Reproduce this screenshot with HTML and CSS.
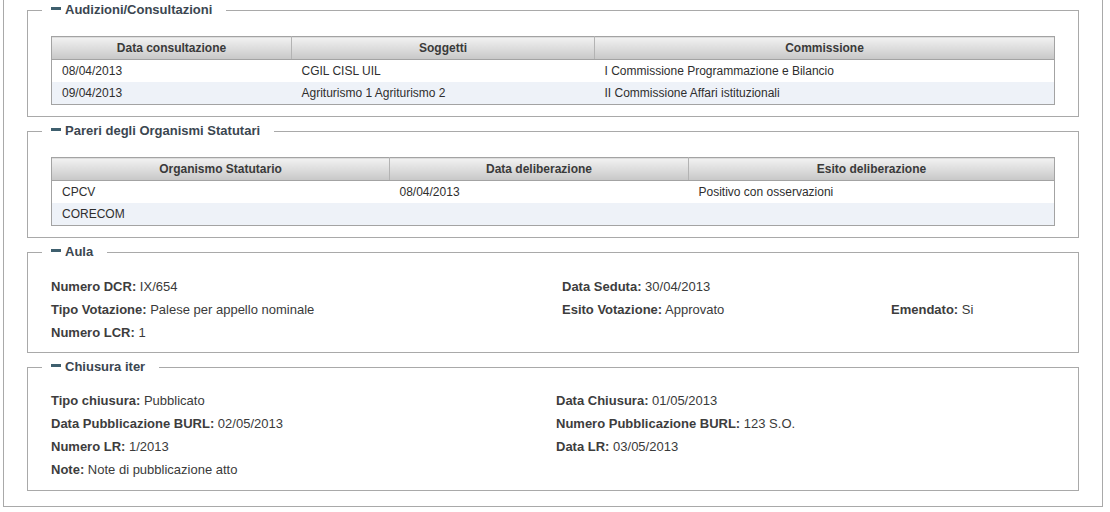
FILE: index.html
```html
<!DOCTYPE html>
<html lang="it">
<head>
<meta charset="utf-8">
<title>Dettaglio atto</title>
<link rel="stylesheet" href="styles.css">
</head>
<body>
<div class="panel">
  <fieldset class="box box-table">
    <legend><span class="toggle"></span>Audizioni/Consultazioni</legend>
    <table class="grid">
      <colgroup><col class="c240"><col class="c303"><col></colgroup>
      <thead>
        <tr><th>Data consultazione</th><th>Soggetti</th><th>Commissione</th></tr>
      </thead>
      <tbody>
        <tr><td>08/04/2013</td><td>CGIL CISL UIL</td><td>I Commissione Programmazione e Bilancio</td></tr>
        <tr class="alt"><td>09/04/2013</td><td>Agriturismo 1 Agriturismo 2</td><td>II Commissione Affari istituzionali</td></tr>
      </tbody>
    </table>
  </fieldset>

  <fieldset class="box box-table">
    <legend><span class="toggle"></span>Pareri degli Organismi Statutari</legend>
    <table class="grid">
      <colgroup><col class="c338"><col class="c299"><col></colgroup>
      <thead>
        <tr><th>Organismo Statutario</th><th>Data deliberazione</th><th>Esito deliberazione</th></tr>
      </thead>
      <tbody>
        <tr><td>CPCV</td><td>08/04/2013</td><td>Positivo con osservazioni</td></tr>
        <tr class="alt"><td>CORECOM</td><td></td><td></td></tr>
      </tbody>
    </table>
  </fieldset>

  <fieldset class="box box-info">
    <legend><span class="toggle"></span>Aula</legend>
    <div class="info info-aula">
      <div><b>Numero DCR:</b> IX/654</div>
      <div><b>Data Seduta:</b> 30/04/2013</div>
      <div></div>
      <div><b>Tipo Votazione:</b> Palese per appello nominale</div>
      <div><b>Esito Votazione:</b> Approvato</div>
      <div><b>Emendato:</b> Si</div>
      <div><b>Numero LCR:</b> 1</div>
    </div>
  </fieldset>

  <fieldset class="box box-info box-info-last">
    <legend><span class="toggle"></span>Chiusura iter</legend>
    <div class="info info-chiusura">
      <div><b>Tipo chiusura:</b> Pubblicato</div>
      <div><b>Data Chiusura:</b> 01/05/2013</div>
      <div><b>Data Pubblicazione BURL:</b> 02/05/2013</div>
      <div><b>Numero Pubblicazione BURL:</b> 123 S.O.</div>
      <div><b>Numero LR:</b> 1/2013</div>
      <div><b>Data LR:</b> 03/05/2013</div>
      <div><b>Note:</b> Note di pubblicazione atto</div>
    </div>
  </fieldset>
</div>
</body>
</html>
```

FILE: styles.css
```css
html, body {
  margin: 0;
  padding: 0;
  background: #ffffff;
}

body {
  font-family: "Liberation Sans", Arial, sans-serif;
  color: #333333;
}

.panel {
  width: 1100px;
  box-sizing: border-box;
  margin: 0 0 0 3px;
  border: 1px solid #a9a9a9;
  border-top: 0;
  padding: 2px 23px 15px 23px;
}

.box {
  margin: 6px 0 0 0;
  padding: 0 23px 11px 23px;
  border: 1px solid #a9a9a9;
  min-width: 0;
}

.box:first-child {
  margin-top: 0;
}

.box legend {
  margin-left: -9px;
  padding: 0 14px 0 9px;
  font-size: 13px;
  line-height: 16px;
  font-weight: bold;
  color: #3b4650;
}

.toggle {
  display: inline-block;
  width: 10px;
  height: 3px;
  background: #3e5f6e;
  margin-right: 4px;
  vertical-align: 4px;
}

.box-table {
  padding-top: 18px;
}

.box-info {
  padding-top: 15px;
  padding-bottom: 8px;
}

.box-info-last {
  padding-top: 14px;
  padding-bottom: 9px;
}

/* tables */
.grid {
  width: 100%;
  table-layout: fixed;
  border-collapse: collapse;
  border: 1px solid #a3a3a3;
  font-size: 12px;
}

.c240 { width: 240px; }
.c303 { width: 303px; }
.c338 { width: 338px; }
.c299 { width: 299px; }

.grid th {
  height: 22px;
  padding: 0;
  font-weight: bold;
  color: #3a3a3a;
  text-align: center;
  background: linear-gradient(#f2f2f2, #c7c7c7);
  border-left: 1px solid #b3b3b3;
  border-bottom: 1px solid #a3a3a3;
}

.grid th:first-child {
  border-left: 0;
}

.grid td {
  height: 22px;
  padding: 0 10px;
  color: #2e2e2e;
  background: #ffffff;
  white-space: nowrap;
}

.grid tr.alt td {
  background: #eef2f8;
}

/* info grids */
.info {
  display: grid;
  font-size: 13px;
  line-height: 23px;
  color: #3a3a3a;
}

.info b {
  color: #3d3d3d;
}

.info-aula {
  grid-template-columns: 511px 329px 1fr;
}

.info-chiusura {
  grid-template-columns: 505px 1fr;
}
```
